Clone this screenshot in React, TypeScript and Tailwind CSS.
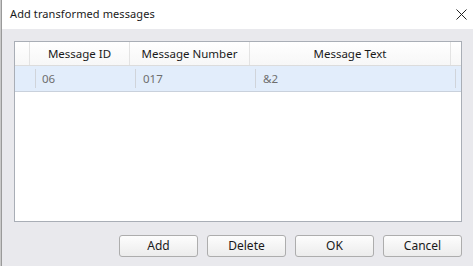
import React from 'react'

const font = { fontFamily: '"Noto Sans", "Open Sans", sans-serif' }

function Button({ label }: { label: string }) {
  return (
    <button className="w-[79px] h-[22px] rounded-[3px] border border-[#adadad] bg-gradient-to-b from-[#fdfdfd] to-[#ececec] text-[12px] text-[#1a1a1a] leading-none">
      {label}
    </button>
  )
}

export default function App() {
  return (
    <div className="w-[473px] h-[266px] flex overflow-hidden bg-[#e9e9ed]" style={font}>
      <div className="w-[2px] h-full bg-[#c9c9c9] border-r border-[#9a9a9a]" />
      <div className="flex-1 flex flex-col">
        <div className="h-[29px] bg-white flex items-center justify-between pl-[8px] pr-[6px]">
          <span className="text-[11px] text-[#1a1a1a] tracking-[0.1px]">Add transformed messages</span>
          <svg width="11" height="11" viewBox="0 0 11 11">
            <path d="M0.5 0.5 L10.5 10.5 M10.5 0.5 L0.5 10.5" stroke="#222" strokeWidth="1" />
          </svg>
        </div>
        <div className="flex-1 flex flex-col pt-[12px] pl-[12px] pr-[11px] pb-[9px]">
          <div className="h-[181px] border border-[#a9aeb6] bg-white flex flex-col">
            <div className="h-[24px] flex bg-gradient-to-b from-white to-[#f7f7f7] border-b border-[#dcdcdc] text-[11.5px] text-[#1a1a1a]">
              <div className="w-[15px] border-r border-[#e3e3e3]" />
              <div className="w-[100px] border-r border-[#e3e3e3] flex items-center justify-center">Message ID</div>
              <div className="w-[120px] border-r border-[#e3e3e3] flex items-center justify-center">Message Number</div>
              <div className="w-[201px] border-r border-[#e3e3e3] flex items-center justify-center">Message Text</div>
              <div className="flex-1" />
            </div>
            <div className="h-[26px] flex bg-[#e2edfb] border-b border-[#c9d1dc] text-[11.5px] text-[#6e6e6e]">
              <div className="w-[21px] flex items-center justify-center">
                <div className="w-px h-[19px] bg-[#d0d4da] ml-auto" />
              </div>
              <div className="w-[100px] flex items-center">
                <span className="pl-[6px] flex-1">06</span>
                <div className="w-px h-[19px] bg-[#d0d4da]" />
              </div>
              <div className="w-[120px] flex items-center">
                <span className="pl-[7px] flex-1">017</span>
                <div className="w-px h-[19px] bg-[#d0d4da]" />
              </div>
              <div className="w-[200px] flex items-center">
                <span className="pl-[7px] flex-1">&amp;2</span>
                <div className="w-px h-[19px] bg-[#d0d4da]" />
              </div>
              <div className="flex-1" />
            </div>
          </div>
          <div className="flex-1 flex items-end justify-end gap-[9px]">
            <Button label="Add" />
            <Button label="Delete" />
            <Button label="OK" />
            <Button label="Cancel" />
          </div>
        </div>
      </div>
    </div>
  )
}
